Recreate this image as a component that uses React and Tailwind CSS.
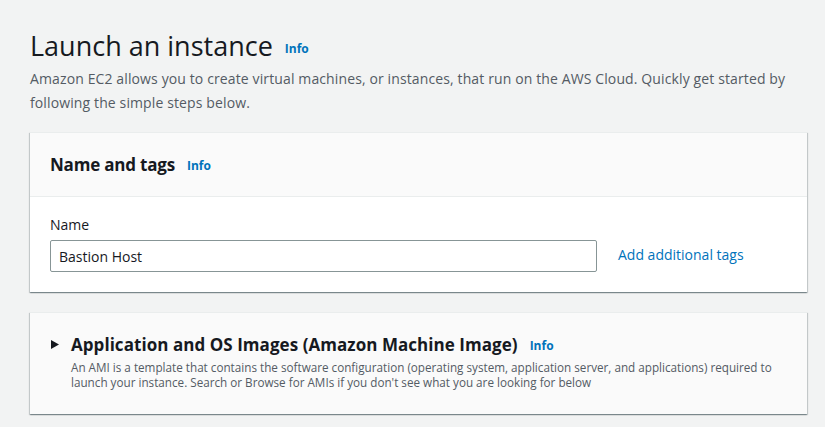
export default function App() {
  return (
    <div className="min-h-screen bg-[#f2f3f3] px-[30px] pt-[26px] font-['Open_Sans',sans-serif] text-[#16191f]">
      <div className="flex items-end gap-3">
        <h1 className="text-[27px] leading-[40px]">Launch an instance</h1>
        <a className="mb-[8px] text-[12px] font-bold text-[#0073bb]">Info</a>
      </div>
      <p className="mt-[1px] text-[14px] leading-[24px] tracking-[0.12px] text-[#545b64]">
        Amazon EC2 allows you to create virtual machines, or instances, that run on the AWS Cloud. Quickly get started by
        <br />
        following the simple steps below.
      </p>

      <div className="mt-[17px] w-[777px] border-t border-[#eaeded] bg-white shadow-[0_1px_1px_0_rgba(0,28,36,0.3),1px_1px_1px_0_rgba(0,28,36,0.15),-1px_1px_1px_0_rgba(0,28,36,0.15)]">
        <div className="flex h-[64px] items-center gap-3 border-b border-[#eaeded] bg-[#fafafa] px-5">
          <h2 className="text-[17px] font-bold tracking-[-0.2px]">Name and tags</h2>
          <a className="mt-[3px] text-[12px] font-bold text-[#0073bb]">Info</a>
        </div>
        <div className="px-5 pb-[20px] pt-[17px]">
          <label className="block text-[14px] leading-[22px]">Name</label>
          <div className="mt-[4px] flex items-center gap-[21px]">
            <input
              readOnly
              value="Bastion Host"
              className="h-[32px] w-[547px] rounded-[2px] border border-[#879596] px-[8px] text-[14px] text-[#16191f] outline-none"
            />
            <a className="mb-[4px] text-[14px] text-[#0073bb]">Add additional tags</a>
          </div>
        </div>
      </div>

      <div className="mt-[20px] w-[777px] border-t border-[#eaeded] bg-[#fafafa] px-5 pb-[24px] pt-[19px] shadow-[0_1px_1px_0_rgba(0,28,36,0.3),1px_1px_1px_0_rgba(0,28,36,0.15),-1px_1px_1px_0_rgba(0,28,36,0.15)]">
        <div className="flex items-center">
          <svg width="8" height="9" viewBox="0 0 8 9" className="ml-[1px] mr-[12px]">
            <path d="M0 0 L8 4.5 L0 9 Z" fill="#16191f" />
          </svg>
          <h2 className="whitespace-nowrap text-[17px] font-bold tracking-[0.05px]">Application and OS Images (Amazon Machine Image)</h2>
          <a className="ml-3 mt-[3px] text-[12px] font-bold text-[#0073bb]">Info</a>
        </div>
        <p className="ml-[21px] mt-[2px] whitespace-nowrap text-[11.7px] leading-[15px] text-[#545b64]">
          An AMI is a template that contains the software configuration (operating system, application server, and applications) required to
          <br />
          launch your instance. Search or Browse for AMIs if you don't see what you are looking for below
        </p>
      </div>
    </div>
  );
}
